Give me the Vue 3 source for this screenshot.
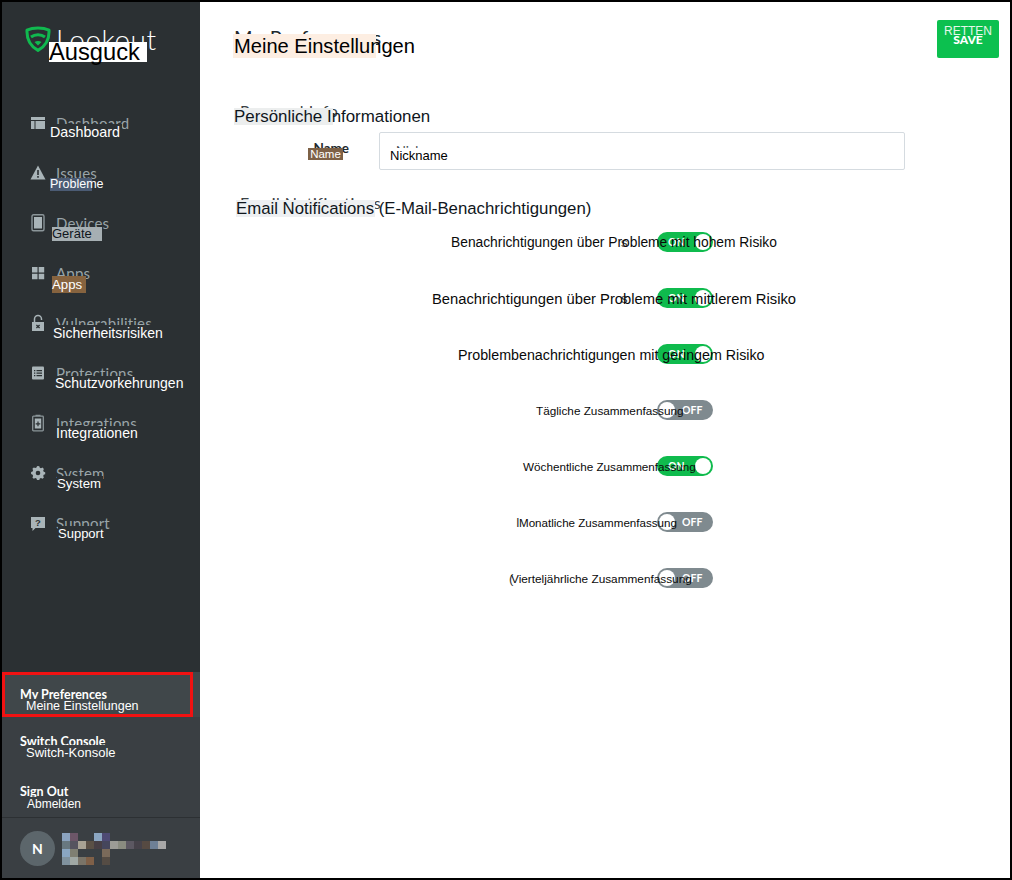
<template>
  <div class="frame">
    <aside class="sidebar">
      <div class="brand">
        <svg class="shield" viewBox="0 0 26 26" width="26" height="26">
          <path d="M2 4.2 C8 1.2 18 1.2 24 4.2 C24.4 12 21 20 13 24.4 C5 20 1.6 12 2 4.2 Z" fill="none" stroke="#10b94f" stroke-width="3" stroke-linejoin="round" />
          <path d="M6 11 C10 8 16 8 20 11" fill="none" stroke="#10b94f" stroke-width="3" />
          <path d="M9.5 16 C11.500 14.600 14.500 14.600 16.500 16 L13 19.500 Z" fill="#10b94f" />
        </svg>
        <span class="brand-name">Lookout</span>
        <span class="brand-tr">Ausguck</span>
      </div>

      <nav class="nav">
        <div v-for="item in navItems" :key="item.label" class="nav-item">
          <svg class="nav-icon" viewBox="0 0 16 18" width="16" height="18" v-html="item.icon"></svg>
          <span class="nav-label">{{ item.label }}</span>
          <span class="tr" :style="trStyle(item.tr, 98 + 50 * navItems.indexOf(item))">{{ item.tr.text }}</span>
        </div>
      </nav>

      <div class="foot">
        <div v-for="link in footLinks" :key="link.label" class="foot-link" :class="link.cls">
          <span class="foot-label">{{ link.label }}</span>
          <span class="tr" :style="trStyle(link.tr, link.top)">{{ link.tr.text }}</span>
          <div v-if="link.cls === 'active'" class="red-box"></div>
        </div>
        <div class="user">
          <div class="avatar">N</div>
          <div class="mosaic">
            <i v-for="(c, i) in mosaic" :key="i" :style="{ background: c }"></i>
          </div>
        </div>
      </div>
    </aside>

    <main class="main">
      <header class="top">
        <h1 class="title">
          My Preferences
          <span class="title-tr">Meine Einstellungen</span>
        </h1>
        <button class="save">
          SAVE
          <span class="save-tr">RETTEN</span>
        </button>
      </header>

      <section class="info">
        <h2 class="sub">
          Personal Info
          <span class="sub-tr">Persönliche Informationen</span>
        </h2>
        <div class="field-row">
          <label class="field-label">
            Name
            <span class="name-tr">Name</span>
          </label>
          <div class="field">
            <span class="field-ph">Nick</span>
            <span class="field-tr">Nickname</span>
          </div>
        </div>
      </section>

      <section class="notify">
        <h2 class="sub">
          Email Notifications
          <span class="sub-tr mail-tr">Email Notifications (E-Mail-Benachrichtigungen)</span>
        </h2>
        <div class="rows">
          <div v-for="row in rows" :key="row.text" class="row">
            <span class="row-rest" :style="{ left: row.restX - 200 + 'px' }">{{ row.rest }}</span>
            <div class="toggle" :class="row.on ? 'on' : 'off'">
              <span class="toggle-text">{{ row.on ? 'ON' : 'OFF' }}</span>
              <span class="thumb"></span>
            </div>
            <span class="row-tr" :style="{ left: row.x - 200 + 'px', fontSize: row.size + 'px' }">{{ row.text }}</span>
          </div>
        </div>
      </section>
    </main>
  </div>
</template>

<script setup>
const dark = '#2b3033'

const navItems = [
  {
    label: 'Dashboard',
    icon: '<path d="M1 3h14v3H1zM1 7h3.5v8H1zM5.5 7H15v8H5.5z" fill="#a9b4b8"/>',
    tr: { text: 'Dashboard', x: 50, y: 124, w: 72, h: 16, size: 14.3, color: '#fff', bg: dark },
  },
  {
    label: 'Issues',
    icon: '<path d="M8 1.5 L15.5 15.5 H0.5 Z" fill="#a9b4b8"/><path d="M7.2 6h1.6v5H7.2zM7.2 12h1.6v1.7H7.2z" fill="#2b3033"/>',
    tr: { text: 'Probleme', x: 50, y: 178, w: 42, h: 13, size: 12.5, color: '#fff', bg: '#4b5b74' },
  },
  {
    label: 'Devices',
    icon: '<rect x="2" y="0.8" width="12" height="16" rx="1.5" fill="none" stroke="#8b9599" stroke-width="1.4"/><rect x="4" y="3" width="8" height="11.5" fill="#a9b4b8"/>',
    tr: { text: 'Geräte', x: 52, y: 227, w: 50, h: 14, size: 13, color: '#10161c', bg: '#a6afb3' },
  },
  {
    label: 'Apps',
    icon: '<path d="M2 3h5.5v5.5H2zM8.7 3h5.5v5.5H8.7zM2 9.7h5.5v5.5H2zM8.7 9.7h5.5v5.5H8.7z" fill="#a9b4b8"/>',
    tr: { text: 'Apps', x: 52, y: 276, w: 34, h: 17, size: 13.2, color: '#fff', bg: '#86633f' },
  },
  {
    label: 'Vulnerabilities',
    icon: '<path d="M4.5 8V5a3.5 3.5 0 0 1 7 0v1" fill="none" stroke="#a9b4b8" stroke-width="1.5"/><rect x="2" y="8" width="12" height="9" fill="#a9b4b8"/><path d="M6.4 11 L9.6 14 M9.6 11 L6.4 14" stroke="#2b3033" stroke-width="1.3"/>',
    tr: { text: 'Sicherheitsrisiken', x: 53, y: 325, w: 111, h: 16, size: 14, color: '#fff', bg: dark },
  },
  {
    label: 'Protections',
    icon: '<rect x="2" y="2.5" width="12" height="13" rx="1" fill="#a9b4b8"/><path d="M4 6h1.3v1.2H4zM4 8.5h1.3v1.2H4zM4 11h1.3v1.2H4zM6.5 6H12v1.2H6.5zM6.5 8.5H12v1.2H6.5zM6.5 11H12v1.2H6.5z" fill="#2b3033"/>',
    tr: { text: 'Schutzvorkehrungen', x: 55, y: 376, w: 129, h: 15, size: 14, color: '#fff', bg: dark },
  },
  {
    label: 'Integrations',
    icon: '<path d="M5.5 1.4H10.500M3.500 2.200H12.500A0.800 0.800 0 0 1 13.300 3V16A0.800 0.800 0 0 1 12.500 16.800H3.500A0.800 0.800 0 0 1 2.700 16V3A0.800 0.800 0 0 1 3.500 2.200Z" fill="none" stroke="#8b9599" stroke-width="1.3"/><rect x="4.800" y="4.500" width="6.400" height="10" fill="#a9b4b8"/><path d="M7.400 7.500h1.200v1.800h1.700v1.200H8.600v1.800H7.400v-1.800H5.700V9.300h1.700z" fill="#2b3033"/>',
    tr: { text: 'Integrationen', x: 56, y: 426, w: 84, h: 15, size: 14, color: '#fff', bg: dark },
  },
  {
    label: 'System',
    icon: '<path d="M8 2l1.300 0.300 0.500 1.500 1.200 0.500 1.500-0.700 1.400 1.400-0.700 1.500 0.500 1.200 1.500 0.500v2l-1.500 0.500-0.500 1.200 0.700 1.500-1.400 1.400-1.500-0.700-1.200 0.500-0.500 1.500H7l-0.500-1.500-1.200-0.500-1.500 0.700-1.400-1.400 0.700-1.500-0.500-1.200L1.100 10V8l1.500-0.500 0.500-1.200-0.700-1.500 1.400-1.400 1.500 0.700 1.200-0.500L7 2.300Z" fill="#a9b4b8"/><circle cx="8" cy="9" r="2.300" fill="#2b3033"/>',
    tr: { text: 'System', x: 57, y: 476, w: 46, h: 15, size: 13.2, color: '#fff', bg: dark },
  },
  {
    label: 'Support',
    icon: '<path d="M1 3h14v11H5.500L2.500 17v-3H1Z" fill="#a9b4b8"/><text x="8" y="12" text-anchor="middle" font-family="Liberation Sans" font-weight="700" font-size="9.500" fill="#2b3033">?</text>',
    tr: { text: 'Support', x: 58, y: 526, w: 46, h: 15, size: 13, color: '#fff', bg: dark },
  },
]

const footLinks = [
  { label: 'My Preferences', cls: 'active', top: 672, tr: { text: 'Meine Einstellungen', x: 26, y: 699, w: 88, h: 14, size: 12.5, color: '#fff', bg: '#40474a' } },
  { label: 'Switch Console', cls: 'switch', top: 717, tr: { text: 'Switch-Konsole', x: 26, y: 745, w: 90, h: 15, size: 13, color: '#fff', bg: '#3a3f43' } },
  { label: 'Sign Out', cls: 'sign', top: 769, tr: { text: 'Abmelden', x: 27, y: 797, w: 54, h: 14, size: 12, color: '#fff', bg: '#3a3f43' } },
]

const rows = [
  { text: 'Benachrichtigungen über Probleme mit hohem Risiko', x: 451, size: 13.8, on: true, rest: 's', restX: 621 },
  { text: 'Benachrichtigungen über Probleme mit mittlerem Risiko', x: 432, size: 14.75, on: true, rest: 's', restX: 621 },
  { text: 'Problembenachrichtigungen mit geringem Risiko', x: 458, size: 14.25, on: true, rest: '', restX: 622 },
  { text: 'Tägliche Zusammenfassung', x: 536, size: 11.75, on: false, rest: '', restX: 622 },
  { text: 'Wöchentliche Zusammenfassung', x: 523, size: 11.7, on: true, rest: '', restX: 622 },
  { text: 'Monatliche Zusammenfassung', x: 519, size: 11.6, on: false, rest: 'I', restX: 516 },
  { text: 'Vierteljährliche Zusammenfassung', x: 511, size: 11.8, on: false, rest: '(', restX: 509 },
]

const _ = null
const mosaic = [
  '#8ba3bf', '#6c5668', _, _, '#8ba6c2', '#4e4a74', _, _, _, _, _, _, _,
  '#687880', '#56545f', '#a8a294', '#5a5046', '#473f45', '#45465c', '#9c9c96', '#8a8c80', '#5c5862', '#46424a', '#564a42', '#6e8096', '#a8a8a8',
  '#8aa6c2', '#7f7f72', _, _, _, '#7a6a5a', _, _, _, _, _, _, _,
  '#80929e', '#a0a8a4', '#7a7468', '#7f6048', _, '#554c44', _, _, _, _, _, _, _,
]

// translated label sits over the original one, coordinates come from the page
function trStyle(tr, top) {
  return {
    left: tr.x - 2 + 'px',
    top: tr.y - top + 'px',
    width: tr.w + 'px',
    height: tr.h + 'px',
    lineHeight: tr.h + 'px',
    fontSize: tr.size + 'px',
    color: tr.color,
    background: tr.bg,
  }
}
</script>

<style scoped>
.frame {
  width: 1012px;
  height: 880px;
  box-sizing: border-box;
  border: 2px solid #000;
  display: flex;
  background: #fff;
  overflow: hidden;
  font-family: "Liberation Sans", Arial, sans-serif;
}

.sidebar {
  width: 198px;
  flex: none;
  background: #2b3033;
  display: flex;
  flex-direction: column;
}

.brand {
  height: 96px;
  box-sizing: border-box;
  padding: 24px 0 0 23px;
  display: flex;
  align-items: flex-start;
  gap: 5px;
  position: relative;
}
.shield {
  flex: none;
}
.brand-name {
  font-family: Lato, sans-serif;
  font-weight: 300;
  font-size: 28px;
  line-height: 26px;
  color: #fff;
  letter-spacing: 0.5px;
}
.brand-tr {
  position: absolute;
  left: 47px;
  top: 40px;
  width: 98px;
  height: 20px;
  line-height: 20px;
  background: #fff;
  color: #000;
  font-size: 23.7px;
  white-space: nowrap;
}

.nav-item {
  height: 50px;
  box-sizing: border-box;
  padding: 0 0 0 28px;
  display: flex;
  align-items: center;
  gap: 10px;
  position: relative;
}
.nav-icon {
  flex: none;
}
.nav-label {
  font-family: Lato, sans-serif;
  font-size: 15px;
  color: #99a4a8;
  letter-spacing: 0.2px;
}

.tr {
  position: absolute;
  white-space: nowrap;
}

.foot {
  margin-top: auto;
  background: #3a3f43;
}
.foot-link {
  height: 52px;
  box-sizing: border-box;
  padding-left: 18px;
  display: flex;
  align-items: center;
  position: relative;
}
.foot-link.active {
  height: 45px;
  background: #40474a;
}
.foot-link.switch {
  padding-bottom: 3px;
}
.foot-link.sign {
  height: 48px;
  padding-bottom: 4px;
}
.foot-label {
  font-family: Lato, sans-serif;
  font-weight: 700;
  font-size: 12.5px;
  color: #fff;
}
.red-box {
  position: absolute;
  left: 0;
  top: 0;
  width: 191px;
  height: 45px;
  box-sizing: border-box;
  border: 3px solid #f11212;
}

.user {
  height: 61px;
  box-sizing: border-box;
  border-top: 1px solid #2c3033;
  padding: 13px 0 0 18px;
  display: flex;
  gap: 7px;
}
.avatar {
  width: 35px;
  height: 35px;
  border-radius: 50%;
  background: #5c666b;
  color: #fff;
  font-family: Lato, sans-serif;
  font-weight: 700;
  font-size: 14px;
  line-height: 35px;
  text-align: center;
}
.mosaic {
  display: grid;
  grid-template-columns: repeat(13, 8px);
  grid-auto-rows: 8px;
  margin-top: 2px;
  height: 32px;
}

.main {
  flex: 1;
  min-width: 0;
  color: #22282c;
}

.top {
  display: flex;
  justify-content: space-between;
  padding: 18px 11px 0 34px;
  height: 102px;
  box-sizing: border-box;
}
.title {
  margin: 8px 0 0;
  height: 24px;
  font-family: Lato, sans-serif;
  font-weight: 400;
  font-size: 20px;
  line-height: 18px;
  position: relative;
  letter-spacing: 0.8px;
  white-space: nowrap;
}
.title-tr {
  position: absolute;
  left: -1px;
  top: 6px;
  width: 142px;
  height: 24px;
  line-height: 24px;
  padding-left: 1px;
  background: #fdeee2;
  color: #000;
  font-family: "Liberation Sans", Arial, sans-serif;
  font-size: 20.1px;
  letter-spacing: 0;
}
.save {
  width: 62px;
  height: 38px;
  border: none;
  border-radius: 2px;
  background: #0cc04f;
  color: #fff;
  font-family: Lato, sans-serif;
  font-weight: 900;
  font-size: 12px;
  padding: 0;
  position: relative;
}
.save-tr {
  position: absolute;
  left: 0;
  right: 0;
  top: 4px;
  text-align: center;
  font-family: "Liberation Sans", Arial, sans-serif;
  font-weight: 400;
  font-size: 12px;
  color: #e4f7ea;
}

.info {
  padding: 0 0 0 34px;
}
.sub {
  margin: 0;
  font-family: Lato, sans-serif;
  font-weight: 400;
  font-size: 16px;
  line-height: 14px;
  height: 18px;
  position: relative;
  letter-spacing: 0.5px;
  color: #3a4145;
  padding-left: 6px;
  white-space: nowrap;
}
.sub-tr {
  position: absolute;
  left: 0;
  top: 4px;
  width: 99px;
  height: 17px;
  line-height: 17px;
  background: #eceeee;
  color: #10161c;
  font-family: "Liberation Sans", Arial, sans-serif;
  font-size: 16.9px;
  letter-spacing: 0;
}
.mail-tr {
  width: 139px;
  left: 2px;
  background: #eef0f2;
  font-size: 16.8px;
}

.field-row {
  display: flex;
  align-items: center;
  gap: 30px;
  margin-top: 10px;
}
.field-label {
  width: 115px;
  text-align: right;
  font-family: Lato, sans-serif;
  font-weight: 700;
  font-size: 13.5px;
  color: #22282c;
  position: relative;
  margin-bottom: 6px;
}
.name-tr {
  position: absolute;
  left: 74px;
  top: 8px;
  width: 35px;
  height: 12px;
  line-height: 12px;
  text-align: center;
  background: #7d6146;
  color: #fff;
  font-family: "Liberation Sans", Arial, sans-serif;
  font-weight: 400;
  font-size: 11.5px;
}
.field {
  width: 526px;
  height: 38px;
  box-sizing: border-box;
  border: 1px solid #d5dbe0;
  border-radius: 2px;
  padding-left: 10px;
  position: relative;
  font-size: 13px;
  color: #000;
}
.field-ph {
  position: absolute;
  left: 16px;
  top: 10px;
  font-family: Lato, sans-serif;
  color: #3f474b;
}
.field-tr {
  position: absolute;
  left: 10px;
  top: 15px;
  line-height: 15px;
  background: #fff;
}

.notify {
  margin-top: 26px;
  padding: 0 0 0 34px;
}
.rows {
  margin-left: -34px;
}
.row {
  height: 56px;
  position: relative;
  display: flex;
  align-items: center;
  padding-left: 457px;
}
.row-rest {
  position: absolute;
  top: 21px;
  font-size: 13px;
  color: #333;
}
.row-tr {
  position: absolute;
  top: 21px;
  line-height: 16px;
  color: #0a0a0a;
  white-space: nowrap;
}

.toggle {
  width: 56px;
  height: 20px;
  border-radius: 10px;
  position: relative;
  flex: none;
  font-family: Lato, sans-serif;
  font-weight: 700;
  font-size: 10.5px;
  line-height: 20px;
  color: #fff;
}
.toggle.on {
  background: #0fbb4d;
}
.toggle.off {
  background: #7f8a8f;
}
.toggle-text {
  position: absolute;
}
.toggle.on .toggle-text {
  left: 11px;
}
.toggle.off .toggle-text {
  left: 25px;
}
.thumb {
  position: absolute;
  top: 2px;
  width: 16px;
  height: 16px;
  border-radius: 50%;
  background: #fff;
}
.toggle.on .thumb {
  right: 2px;
}
.toggle.off .thumb {
  left: 2px;
}
</style>
